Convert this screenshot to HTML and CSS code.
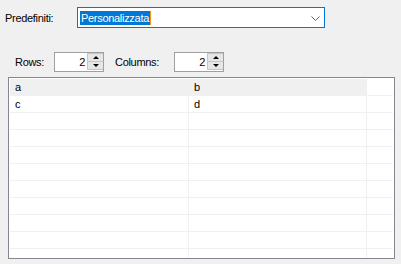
FILE: index.html
```html
<!DOCTYPE html>
<html lang="it">
<head>
  <meta charset="UTF-8">
  <title>Tabella</title>
  <link rel="stylesheet" href="styles.css">
</head>
<body>

  <div class="preset-row">
    <label class="lbl-preset">Predefiniti:</label>
    <div class="combo">
      <span class="combo-text"><span class="sel">Personalizzata</span><span class="caret"></span></span>
      <svg class="chevron" width="9" height="5" viewBox="0 0 9 5"><path d="M0.5 0.5 L4.5 4.5 L8.5 0.5" fill="none" stroke="#606060" stroke-width="1"/></svg>
    </div>
  </div>

  <div class="size-row">
    <label class="lbl-rows">Rows:</label>
    <div class="spin">
      <span class="spin-val">2</span>
      <div class="spin-btns">
        <div class="spin-btn"><span class="tri-up"></span></div>
        <div class="spin-btn"><span class="tri-down"></span></div>
      </div>
    </div>
    <label class="lbl-cols">Columns:</label>
    <div class="spin">
      <span class="spin-val">2</span>
      <div class="spin-btns">
        <div class="spin-btn"><span class="tri-up"></span></div>
        <div class="spin-btn"><span class="tri-down"></span></div>
      </div>
    </div>
  </div>

  <div class="grid">
    <div class="grid-row first"><div class="cell">a</div><div class="cell">b</div><div class="cell filler"></div></div>
    <div class="grid-row"><div class="cell">c</div><div class="cell">d</div><div class="cell filler"></div></div>
    <div class="grid-row"><div class="cell"></div><div class="cell"></div><div class="cell filler"></div></div>
    <div class="grid-row"><div class="cell"></div><div class="cell"></div><div class="cell filler"></div></div>
    <div class="grid-row"><div class="cell"></div><div class="cell"></div><div class="cell filler"></div></div>
    <div class="grid-row"><div class="cell"></div><div class="cell"></div><div class="cell filler"></div></div>
    <div class="grid-row"><div class="cell"></div><div class="cell"></div><div class="cell filler"></div></div>
    <div class="grid-row"><div class="cell"></div><div class="cell"></div><div class="cell filler"></div></div>
    <div class="grid-row"><div class="cell"></div><div class="cell"></div><div class="cell filler"></div></div>
    <div class="grid-row"><div class="cell"></div><div class="cell"></div><div class="cell filler"></div></div>
    <div class="grid-row"><div class="cell"></div><div class="cell"></div><div class="cell filler"></div></div>
  </div>

</body>
</html>
```

FILE: styles.css
```css
body {
  margin: 0;
  background: #f0f0f0;
  color: #000;
  font-family: "Liberation Sans", Arial, sans-serif;
  font-size: 11px;
  letter-spacing: -0.3px;
}
.preset-row {
  display: flex;
  align-items: center;
  padding: 7px 0 0 5px;
}
.lbl-preset {
  width: 72px;
}
.combo {
  box-sizing: border-box;
  width: 248px;
  height: 21px;
  display: flex;
  align-items: center;
  justify-content: space-between;
  background: #fff;
  border: 1px solid #0078d7;
  padding: 0 4px 0 2px;
}
.combo-text {
  display: flex;
  align-items: center;
}
.sel {
  background: #0078d7;
  color: #fff;
  line-height: 14px;
  padding: 0 1px;
}
.caret {
  width: 1px;
  height: 14px;
  background: #f7941d;
}
.chevron {
  display: block;
  margin-top: 1px;
}
.size-row {
  display: flex;
  align-items: center;
  margin-top: 24px;
  padding-left: 15px;
}
.lbl-rows {
  width: 39px;
}
.lbl-cols {
  width: 59px;
  margin-left: 11px;
}
.spin {
  box-sizing: border-box;
  width: 50px;
  height: 20px;
  display: flex;
  justify-content: flex-end;
  align-items: center;
  background: #fff;
  border: 1px solid #a0a0a0;
  padding: 0 0 0 2px;
}
.spin-val {
  flex: 1;
  text-align: right;
  padding-right: 2px;
}
.spin-btns {
  display: flex;
  flex-direction: column;
  align-self: stretch;
  width: 16px;
  padding-bottom: 1px;
}
.spin-btn {
  flex: 1;
  display: flex;
  align-items: center;
  justify-content: center;
  background: #e6e6e6;
  border: 1px solid #c6c6c6;
  border-right: none;
}
.spin-btn + .spin-btn {
  border-top: none;
}
.tri-up {
  width: 0;
  height: 0;
  border-left: 3px solid transparent;
  border-right: 3px solid transparent;
  border-bottom: 3px solid #000;
}
.tri-down {
  width: 0;
  height: 0;
  border-left: 3px solid transparent;
  border-right: 3px solid transparent;
  border-top: 3px solid #000;
}
.grid {
  box-sizing: border-box;
  width: 387px;
  height: 182px;
  margin: 5px 0 0 8px;
  padding: 1px;
  background: #fff;
  border: 1px solid #828790;
  overflow: hidden;
}
.grid-row {
  display: grid;
  grid-template-columns: 179px 178px 26px;
  height: 17px;
}
.cell {
  box-sizing: border-box;
  height: 17px;
  line-height: 16px;
  padding-left: 5px;
  border-right: 1px solid #f0f0f0;
  border-bottom: 1px solid #f0f0f0;
}
.cell.filler {
  border-right: none;
}
.first .cell {
  background: #f0f0f0;
}
.first .cell.filler {
  background: #fff;
}
```
